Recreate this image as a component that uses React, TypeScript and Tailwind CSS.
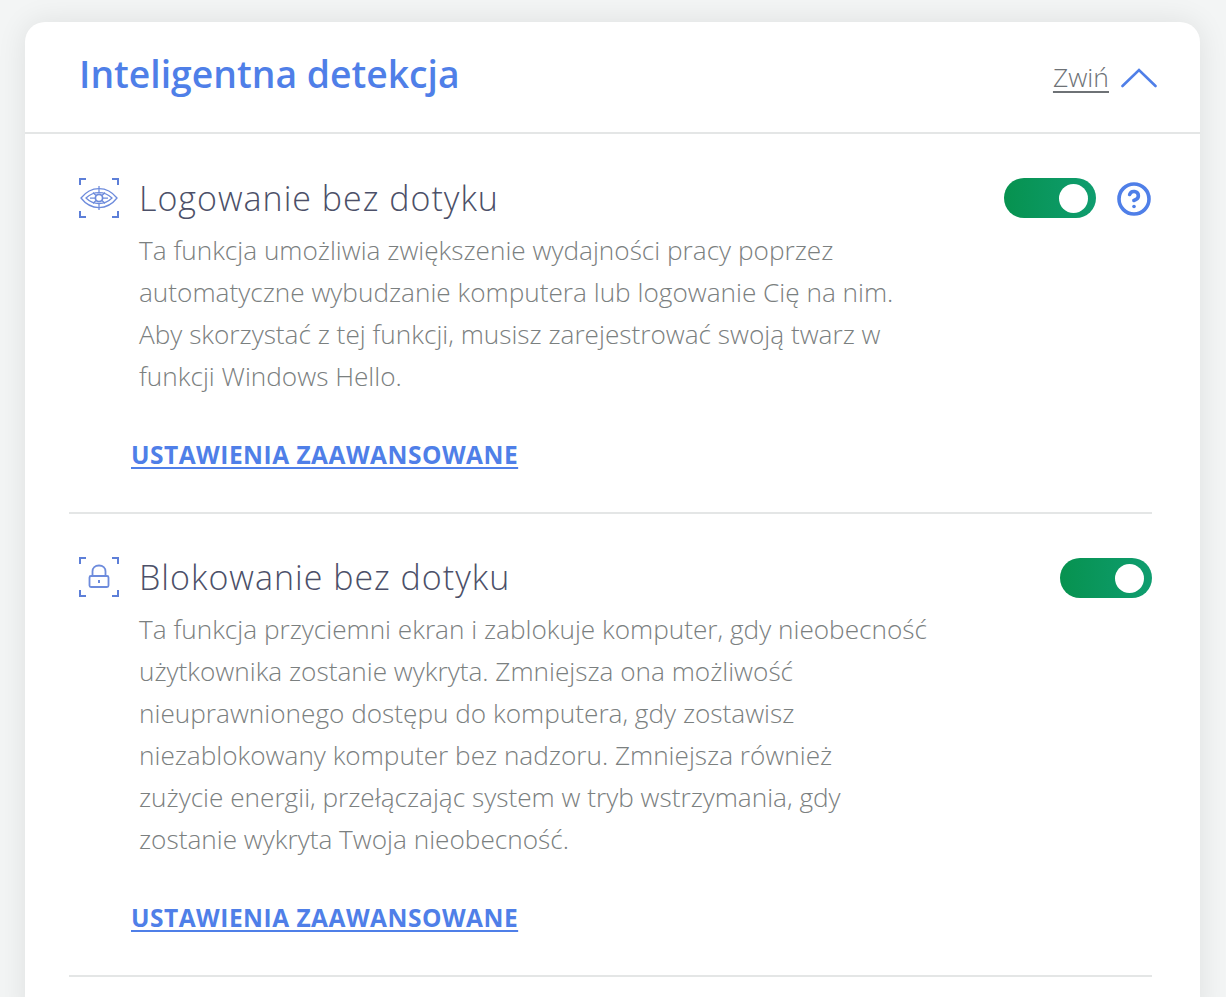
import { HelpCircle } from 'lucide-react'

function Corners() {
  return <path d="M2 8V2H8M34 2H40V8M2 34V40H8M34 40H40V34" strokeWidth="2" stroke="#5d7fd8" fill="none" />
}

function EyeIcon() {
  return (
    <svg width="42" height="42" viewBox="0 0 42 42" fill="none" stroke="#6d8bdc" strokeWidth="1.25">
      <Corners />
      <path d="M3 21C8 14.5 14 11.5 21 11.5S34 14.5 39 21C34 27.5 28 30.5 21 30.5S8 27.5 3 21Z" />
      <path d="M8 21C12 17 16 15.5 21 15.5S30 17 34 21C30 25 26 26.5 21 26.5S12 25 8 21Z" />
      <circle cx="21" cy="21" r="3.6" strokeWidth="1.7" />
      <path d="M21 9V16M21 26V33M12 21H17.5M24.5 21H30M15 15.5L18 18.5M27 15.5L24 18.5M15 26.5L18 23.5M27 26.5L24 23.5" />
    </svg>
  )
}

function LockIcon() {
  return (
    <svg width="42" height="42" viewBox="0 0 42 42" fill="none" stroke="#6d8bdc" strokeWidth="1.8">
      <Corners />
      <path d="M14.5 20V15.5C14.5 12 17 9.5 21 9.5S27.5 12 27.5 15.5V20" />
      <rect x="11.5" y="20" width="19" height="11" rx="1.5" />
      <path d="M21 24V27" strokeWidth="2" />
    </svg>
  )
}

function Toggle() {
  return (
    <div className="flex h-10 w-[92px] items-center justify-end rounded-full bg-gradient-to-r from-[#07924f] to-[#0f9d6f] pr-[8px]">
      <div className="h-[29px] w-[29px] rounded-full bg-white" />
    </div>
  )
}

function Feature({
  icon,
  title,
  lines,
  help,
  last,
}: {
  icon: React.ReactNode
  title: string
  lines: string[]
  help?: boolean
  last?: boolean
}) {
  return (
    <section className={last ? 'mr-12 ml-11 h-[463px] border-b-2 border-[#e4e6e6]' : 'mr-12 ml-11 h-[380px] border-b-2 border-[#e4e6e6]'}>
      <div className={last ? 'flex items-start justify-between pt-[42px]' : 'flex items-start justify-between pt-[43px]'}>
        <div className="flex items-center gap-[19px] pl-[9px]">
          {icon}
          <h2 className="text-[34px] leading-[42px] font-light tracking-[1px] text-[#4c5068]">{title}</h2>
        </div>
        <div className={last ? 'flex items-center gap-[20px] pt-[2px]' : 'flex items-center gap-[20px] pt-[1px]'}>
          <Toggle />
          {help && <HelpCircle className="mt-[2px] h-[36px] w-[36px] text-[#4f7fe8]" strokeWidth={2.4} />}
        </div>
      </div>
      <p className="mt-[10px] ml-[70px] text-[26.2px] leading-[42px] font-light text-[#7b8080]">
        {lines.map((line) => (
          <span key={line} className="block whitespace-nowrap">{line}</span>
        ))}
      </p>
      <a className="mt-[41px] ml-[62px] block text-[24.5px] leading-[34px] font-bold tracking-[0.5px] text-[#4f7fe8] underline underline-offset-[3px]">
        USTAWIENIA ZAAWANSOWANE
      </a>
    </section>
  )
}

export default function App() {
  return (
    <div className="h-[997px] overflow-hidden bg-[#f3f5f5] pt-[22px] pl-[25px] font-['Open_Sans',sans-serif]">
      <main className="h-[1000px] w-[1175px] rounded-t-[20px] bg-white shadow-[0_0_30px_rgba(0,0,0,0.09)]">
        {/* Header */}
        <header className="flex h-[112px] items-center justify-between border-b-2 border-[#e4e6e6] pr-[43px] pl-[54px]">
          <h1 className="pb-[6px] text-[37.3px] leading-[50px] font-semibold text-[#4f7fe8]">Inteligentna detekcja</h1>
          <div className="flex items-center gap-[12px] pt-[2px]">
            <a className="text-[26.5px] font-light text-[#6e7276] underline underline-offset-[4px]">Zwiń</a>
            <svg width="36" height="20" viewBox="0 0 36 20" fill="none" stroke="#4f7fe8" strokeWidth="2.6" strokeLinecap="round">
              <path d="M1.5 18L18 2L34.5 18" />
            </svg>
          </div>
        </header>

        <Feature
          icon={<EyeIcon />}
          title="Logowanie bez dotyku"
          help
          lines={[
            'Ta funkcja umożliwia zwiększenie wydajności pracy poprzez',
            'automatyczne wybudzanie komputera lub logowanie Cię na nim.',
            'Aby skorzystać z tej funkcji, musisz zarejestrować swoją twarz w',
            'funkcji Windows Hello.',
          ]}
        />
        <Feature
          icon={<LockIcon />}
          title="Blokowanie bez dotyku"
          last
          lines={[
            'Ta funkcja przyciemni ekran i zablokuje komputer, gdy nieobecność',
            'użytkownika zostanie wykryta. Zmniejsza ona możliwość',
            'nieuprawnionego dostępu do komputera, gdy zostawisz',
            'niezablokowany komputer bez nadzoru. Zmniejsza również',
            'zużycie energii, przełączając system w tryb wstrzymania, gdy',
            'zostanie wykryta Twoja nieobecność.',
          ]}
        />
      </main>
    </div>
  )
}
